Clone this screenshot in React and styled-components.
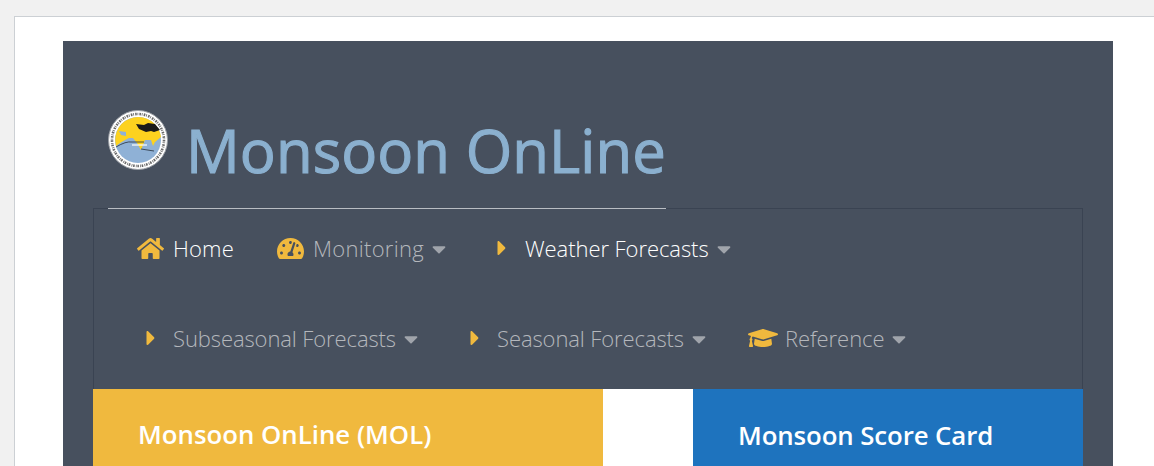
import styled, { createGlobalStyle } from 'styled-components';
import { FaHome, FaTachometerAlt, FaCaretRight, FaCaretDown, FaGraduationCap } from 'react-icons/fa';

const GlobalStyle = createGlobalStyle`
  html, body {
    margin: 0;
    height: 466px;
    overflow: hidden;
    background: #f1f1f1;
    font-family: "Open Sans", "Noto Sans", sans-serif;
  }
`;

const Sheet = styled.div`
  margin: 16px 0 0 14px;
  height: 450px;
  box-sizing: border-box;
  background: #fff;
  border: solid #ccd0d4;
  border-width: 1px 0 0 1px;
  padding: 24px 0 0 48px;
`;

const Panel = styled.div`
  width: 1050px;
  height: 425px;
  box-sizing: border-box;
  background: #47505e;
  padding: 68px 30px 0;
`;

const Brand = styled.h1`
  display: inline-flex;
  align-items: flex-start;
  margin: 0 0 0 15px;
  height: 100px;
  box-sizing: border-box;
  border-bottom: 1px solid #b9bdc3;
  color: #8bb0cf;
  font-size: 59.8px;
  font-weight: 400;
  line-height: 82px;
  letter-spacing: 0.08px;
  -webkit-text-stroke: 1.1px #8bb0cf;
`;

const Logo = styled.svg`
  width: 60px;
  height: 60px;
  margin: 1px 18px 0 0;
  flex: none;
`;

const Nav = styled.nav`
  display: flex;
  flex-wrap: wrap;
  align-content: flex-start;
  column-gap: 43px;
  row-gap: 10px;
  box-sizing: border-box;
  height: 181px;
  margin-top: -1px;
  padding: 0 43px;
  border: 1px solid #3a4352;
  border-bottom: 0;
`;

const NavItem = styled.a`
  display: flex;
  align-items: center;
  height: 80px;
  box-sizing: border-box;
  padding-bottom: 2px;
  font-size: 22px;
  font-weight: 300;
  letter-spacing: ${(p) => p.$spacing}px;
  color: ${(p) => (p.$active ? '#fff' : '#b4b7bc')};
`;

const IconSlot = styled.span`
  width: 27px;
  margin-right: 9px;
  display: flex;
  justify-content: center;
  color: #f0b93e;
  font-size: ${(p) => p.$size}px;

  svg {
    flex: none;
  }
`;

const Caret = styled(FaCaretDown)`
  width: 14px;
  height: 22px;
  margin: 2px 0 0 8px;
  color: #a0a4ab;
`;

const Cards = styled.div`
  display: grid;
  grid-template-columns: 510px 390px;
  column-gap: 90px;
  background: #fff;
`;

const Card = styled.div`
  height: 77px;
  box-sizing: border-box;
  padding: ${(p) => p.$top}px 45px 0;
  background: ${(p) => p.$color};
  color: #fff;
  font-size: 25.8px;
  font-weight: 600;
  line-height: 38px;
  letter-spacing: ${(p) => p.$spacing || 0}px;
`;

const items = [
  { label: 'Home', icon: <FaHome />, size: 27, spacing: 0.19, active: true },
  { label: 'Monitoring', icon: <FaTachometerAlt />, size: 27, spacing: 0.29, caret: true },
  { label: 'Weather Forecasts', icon: <FaCaretRight />, size: 24, spacing: -0.06, active: true, caret: true },
  { label: 'Subseasonal Forecasts', icon: <FaCaretRight />, size: 24, spacing: -0.1, caret: true },
  { label: 'Seasonal Forecasts', icon: <FaCaretRight />, size: 24, spacing: -0.1, caret: true },
  { label: 'Reference', icon: <FaGraduationCap />, size: 30, spacing: -0.06, caret: true },
];

const MonsoonLogo = () => (
  <Logo viewBox="0 0 60 60">
    <circle cx="30" cy="30" r="29.5" fill="#fff" stroke="#9a9ea4" strokeWidth="1" />
    <circle cx="30" cy="30" r="26" fill="none" stroke="#6a6a6a" strokeWidth="2.6" strokeDasharray="1.6 0.8 0.8 1.2" />
    <circle cx="30" cy="30" r="23" fill="#8fb1d6" />
    <path d="M8 36 L12 33 L17 30 L21 28 L25 28 L29 33 L33 40 L37 30 L43 30 L45 36 L47 32 L53 27 A23 23 0 1 0 8 36 Z" fill="#fdd21f" />
    <path d="M11 21 L18 22 L18 26 L13 25 Z" fill="#8fb1d6" />
    <path d="M28 14 L36 15 L40 13 L47 14 L52 20 L46 22 L43 21 L38 22 L31 19 Z" fill="#1a1a1a" />
    <path d="M8 37 Q18 31 24 32 L36 32 M33 39 L46 41" fill="none" stroke="#26303c" strokeWidth="0.8" />
    <path d="M24 35 H39" stroke="#fff" strokeWidth="1.2" />
  </Logo>
);

export default function App() {
  return (
    <>
      <GlobalStyle />
      <Sheet>
        <Panel>
          <Brand>
            <MonsoonLogo />
            Monsoon OnLine
          </Brand>
          <Nav>
            {items.map((item) => (
              <NavItem key={item.label} $active={item.active} $spacing={item.spacing}>
                <IconSlot $size={item.size}>{item.icon}</IconSlot>
                {item.label}
                {item.caret && <Caret />}
              </NavItem>
            ))}
          </Nav>
          <Cards>
            <Card $color="#f0b93e" $top={26}>Monsoon OnLine (MOL)</Card>
            <Card $color="#1e73be" $top={27} $spacing={-0.1}>Monsoon Score Card</Card>
          </Cards>
        </Panel>
      </Sheet>
    </>
  );
}
